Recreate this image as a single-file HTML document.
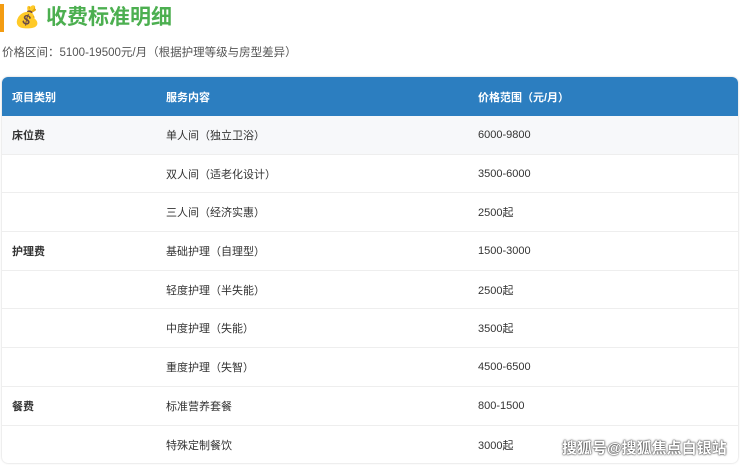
<!DOCTYPE html>
<html><head><meta charset="utf-8"><style>
body{margin:0;width:740px;height:466px;background:#fff;font-family:"Liberation Sans","Noto Sans CJK SC",sans-serif;position:relative;overflow:hidden}
.bar{position:absolute;left:0;top:4px;width:4px;height:28px;background:#f39c12}
.title{position:absolute;left:14px;top:3px;font-size:21px;font-weight:bold;color:#4caf50;line-height:30px}
.sub{position:absolute;left:2px;top:45px;font-size:11.5px;color:#555;line-height:16px}
.tbl{position:absolute;left:2px;top:77px;width:736px;height:386px;border-radius:6px;overflow:hidden;box-shadow:0 0 2px rgba(0,0,0,.2)}
.row{display:flex;height:38.7px;align-items:center;border-bottom:1px solid #eee;box-sizing:border-box;font-size:11px;color:#333}
.hd{background:#2c7ec0;color:#fff;font-weight:bold;height:39px;border:none}
.c1{width:154px;padding-left:10px;box-sizing:border-box}
.c2{width:312px;padding-left:10px;box-sizing:border-box}
.c3{padding-left:10px}
.b{font-weight:bold}
.wm{position:absolute;left:562px;top:437px;font-size:15px;color:#fff;text-shadow:0 0 2px #333,0 0 1px #000;font-weight:bold}
</style></head><body>
<div class="bar"></div>
<div class="title">💰 收费标准明细</div>
<div class="sub">价格区间：5100-19500元/月（根据护理等级与房型差异）</div>
<div class="tbl">
<div class="row hd"><div class="c1">项目类别</div><div class="c2">服务内容</div><div class="c3">价格范围（元/月）</div></div>
<div class="row" style="background:#f7f8fa"><div class="c1 b">床位费</div><div class="c2">单人间（独立卫浴）</div><div class="c3">6000-9800</div></div>
<div class="row"><div class="c1"></div><div class="c2">双人间（适老化设计）</div><div class="c3">3500-6000</div></div>
<div class="row"><div class="c1"></div><div class="c2">三人间（经济实惠）</div><div class="c3">2500起</div></div>
<div class="row"><div class="c1 b">护理费</div><div class="c2">基础护理（自理型）</div><div class="c3">1500-3000</div></div>
<div class="row"><div class="c1"></div><div class="c2">轻度护理（半失能）</div><div class="c3">2500起</div></div>
<div class="row"><div class="c1"></div><div class="c2">中度护理（失能）</div><div class="c3">3500起</div></div>
<div class="row"><div class="c1"></div><div class="c2">重度护理（失智）</div><div class="c3">4500-6500</div></div>
<div class="row"><div class="c1 b">餐费</div><div class="c2">标准营养套餐</div><div class="c3">800-1500</div></div>
<div class="row" style="border:none"><div class="c1"></div><div class="c2">特殊定制餐饮</div><div class="c3">3000起</div></div>
</div>
<div class="wm">搜狐号@搜狐焦点白银站</div>
</body></html>
